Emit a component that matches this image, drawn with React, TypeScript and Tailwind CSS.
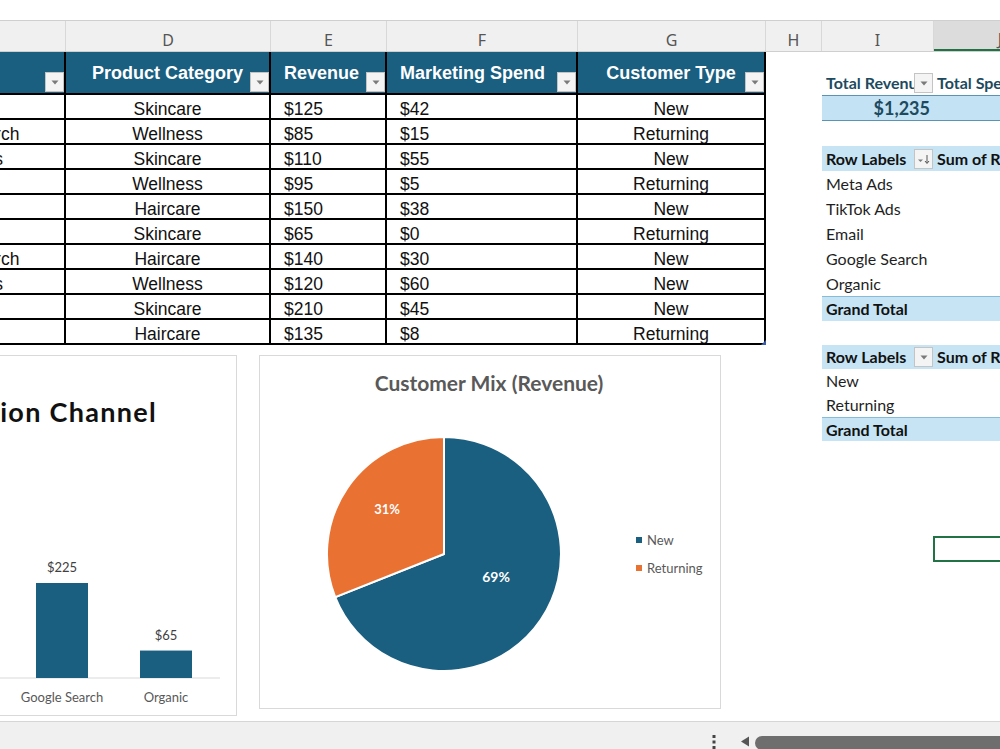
import clsx from "clsx";

const TEAL = "#1a5e80";
const ORANGE = "#e97132";

const COLS = [
  { w: "w-[208px]", align: "justify-center" },
  { w: "w-[205px]", align: "justify-center" },
  { w: "w-[116px]", align: "justify-start pl-[13px]" },
  { w: "w-[191px]", align: "justify-start pl-[13px]" },
  { w: "w-[188px]", align: "justify-center" },
];

const HEAD = ["Channel", "Product Category", "Revenue", "Marketing Spend", "Customer Type"];

const ROWS = [
  ["Meta Ads", "Skincare", "$125", "$42", "New"],
  ["Google Search", "Wellness", "$85", "$15", "Returning"],
  ["TikTok Ads", "Skincare", "$110", "$55", "New"],
  ["Email", "Wellness", "$95", "$5", "Returning"],
  ["Meta Ads", "Haircare", "$150", "$38", "New"],
  ["Organic", "Skincare", "$65", "$0", "Returning"],
  ["Google Search", "Haircare", "$140", "$30", "New"],
  ["TikTok Ads", "Wellness", "$120", "$60", "New"],
  ["Meta Ads", "Skincare", "$210", "$45", "New"],
  ["Email", "Haircare", "$135", "$8", "Returning"],
];

const LETTERS = [
  { l: "", w: "w-[208px]" },
  { l: "D", w: "w-[205px]" },
  { l: "E", w: "w-[116px]" },
  { l: "F", w: "w-[191px]" },
  { l: "G", w: "w-[188px]" },
  { l: "H", w: "w-[56px]" },
  { l: "I", w: "w-[112px]" },
];

const BY_CHANNEL = [
  { name: "Meta Ads", value: 485 },
  { name: "TikTok Ads", value: 230 },
  { name: "Email", value: 230 },
  { name: "Google Search", value: 225 },
  { name: "Organic", value: 65 },
];

function FilterButton({ className, sort }: { className?: string; sort?: boolean }) {
  return (
    <span
      className={clsx(
        "flex h-[20px] w-[19px] items-center justify-center border border-[#c4c4c4] bg-[#f4f4f4]",
        className
      )}
    >
      {sort ? (
        <svg width="14" height="12" viewBox="0 0 14 12">
          <path d="M1 6.5h5L3.5 9z" fill="#7a7a7a" />
          <path d="M10 2v8M8 8l2 2.5L12 8" stroke="#555" strokeWidth="1" fill="none" />
        </svg>
      ) : (
        <svg width="8" height="5" viewBox="0 0 8 5">
          <path d="M0.5 0.5h7L4 4.5z" fill="#7a7a7a" />
        </svg>
      )}
    </span>
  );
}

function ColumnLetters() {
  return (
    <div className="flex h-[32px] shrink-0 border-y border-[#cfcfcf] bg-[#f0f0f0] font-['Noto_Sans',sans-serif] text-[16px] text-[#555]">
      <div className="-ml-[142px] flex">
        {LETTERS.map((c, i) => (
          <div
            key={i}
            className={clsx("flex shrink-0 items-end justify-center border-r border-[#d8d8d8] pb-[4px] leading-[14px]", c.w)}
          >
            {c.l}
          </div>
        ))}
        <div className="flex w-[132px] shrink-0 items-end justify-center border-b-2 border-[#217346] bg-[#dcdcdc] pb-[3px] leading-[14px]">
          J
        </div>
      </div>
    </div>
  );
}

function SalesTable() {
  return (
    <div className="font-['Liberation_Sans',Arial,sans-serif]">
      <div className="flex h-[43px] border-b-2 border-black bg-[#1a5e80] text-[18px] font-bold text-white">
        {HEAD.map((h, i) => (
          <div
            key={i}
            className={clsx(
              "relative flex h-full shrink-0 items-center overflow-hidden whitespace-nowrap border-r-2 border-black pt-[1px]",
              COLS[i].w,
              COLS[i].align
            )}
          >
            {h}
            <FilterButton className="absolute bottom-[1px] right-0" />
          </div>
        ))}
      </div>
      {ROWS.map((r, ri) => (
        <div key={ri} className="relative flex h-[25px] border-b-2 border-black text-[17.5px] text-[#111]">
          {r.map((v, i) => (
            <div
              key={i}
              className={clsx(
                "flex h-full shrink-0 items-center overflow-hidden whitespace-nowrap border-r-2 border-black pt-[4px] leading-[20px]",
                COLS[i].w,
                COLS[i].align
              )}
            >
              {v}
            </div>
          ))}
          {ri === ROWS.length - 1 && (
            <svg className="absolute -bottom-[2px] right-0" width="5" height="5" viewBox="0 0 5 5">
              <path d="M5 0v5H0z" fill="#3b5ba8" />
            </svg>
          )}
        </div>
      ))}
    </div>
  );
}

function ChannelChart() {
  const base = 322;
  const k = 0.4222;
  return (
    <div className="-ml-[250px] h-[361px] w-[629px] shrink-0 border border-[#d9d9d9] bg-white">
      <svg width="627" height="359" className="font-['Lato',sans-serif]">
        <text x="548" y="66" textAnchor="end" fontSize="27" fontWeight="700" letterSpacing="1.3" fill="#111">
          Revenue by Acquisition Channel
        </text>
        <line x1="90" x2="611" y1={base} y2={base} stroke="#d9d9d9" strokeWidth="1" />
        {BY_CHANNEL.map((d, i) => {
          const cx = 141 + i * 104;
          const h = d.value * k;
          return (
            <g key={d.name}>
              <rect x={cx - 26} y={base - h} width="52" height={h} fill={TEAL} />
              <text x={cx} y={base - h - 11} textAnchor="middle" fontSize="13" fill="#404040">
                ${d.value}
              </text>
              <text x={cx} y="346" textAnchor="middle" fontSize="13" fill="#595959">
                {d.name}
              </text>
            </g>
          );
        })}
      </svg>
    </div>
  );
}

function CustomerMixChart() {
  return (
    <div className="ml-[22px] h-[354px] w-[462px] shrink-0 border border-[#d9d9d9] bg-white">
      <svg width="460" height="352" className="font-['Lato',sans-serif]">
        <text x="229" y="35" textAnchor="middle" fontSize="21" fontWeight="700" fill="#595959">
          Customer Mix (Revenue)
        </text>
        <path d="M184 198 L184 81 A117 117 0 1 1 75.2 241.1 Z" fill={TEAL} stroke="#fff" strokeWidth="2" />
        <path d="M184 198 L75.2 241.1 A117 117 0 0 1 184 81 Z" fill={ORANGE} stroke="#fff" strokeWidth="2" />
        <text x="127" y="158" textAnchor="middle" fontSize="13" fontWeight="700" fill="#fff">
          31%
        </text>
        <text x="236" y="226" textAnchor="middle" fontSize="14" fontWeight="700" fill="#fff">
          69%
        </text>
        <rect x="376" y="181" width="6" height="6" fill={TEAL} />
        <text x="387" y="189" fontSize="13" fill="#595959">
          New
        </text>
        <rect x="376" y="209" width="6" height="6" fill={ORANGE} />
        <text x="387" y="217" fontSize="13" fill="#595959">
          Returning
        </text>
      </svg>
    </div>
  );
}

function PivotHeader({ left, right, sort, blue }: { left: string; right: string; sort?: boolean; blue?: boolean }) {
  return (
    <div className={clsx("flex h-full items-center font-bold", blue ? "bg-[#c6e4f4] text-[#111]" : "text-[#1d4a5e]")}>
      <div className="flex w-[112px] shrink-0 items-center">
        <span className="w-[92px] overflow-hidden whitespace-nowrap pl-[4px]">{left}</span>
        <FilterButton sort={sort} />
      </div>
      <span className="whitespace-nowrap pl-[3px]">{right}</span>
    </div>
  );
}

function Pivots() {
  const channels = ["Meta Ads", "TikTok Ads", "Email", "Google Search", "Organic"];
  return (
    <div className="min-w-0 flex-1 overflow-hidden pl-[56px] font-['Lato',sans-serif] text-[16px]">
      <div className="flex h-[43px] items-end">
        <div className="h-[24px] w-full">
          <PivotHeader left="Total Revenue" right="Total Spend" />
        </div>
      </div>
      <div className="flex h-[26px] items-center border-y border-[#5b93b3] bg-[#c3e2f3] text-[18px] font-bold text-[#1d4a5e]">
        <span className="w-[112px] pr-[4px] text-right">$1,235</span>
      </div>
      <div className="h-[25px]" />
      <div className="h-[25px]">
        <PivotHeader left="Row Labels" right="Sum of Revenue" sort blue />
      </div>
      {channels.map((c) => (
        <div key={c} className="flex h-[25px] items-center pl-[4px] text-[#1f1f1f]">
          {c}
        </div>
      ))}
      <div className="flex h-[25px] items-center border-t border-[#86bcd8] bg-[#c6e4f4] pl-[4px] font-bold text-[#111]">
        Grand Total
      </div>
      <div className="h-[24px]" />
      <div className="h-[24px]">
        <PivotHeader left="Row Labels" right="Sum of Revenue" blue />
      </div>
      <div className="flex h-[24px] items-center pl-[4px] text-[#1f1f1f]">New</div>
      <div className="flex h-[24px] items-center pl-[4px] text-[#1f1f1f]">Returning</div>
      <div className="flex h-[24px] items-center border-t border-[#86bcd8] bg-[#c6e4f4] pl-[4px] font-bold text-[#111]">
        Grand Total
      </div>
      <div className="h-[95px]" />
      <div className="flex h-[26px] pl-[111px]">
        <div className="h-full w-[90px] shrink-0 border-2 border-[#217346]" />
      </div>
    </div>
  );
}

function StatusBar() {
  return (
    <div className="flex h-[28px] shrink-0 items-start justify-end border-t border-[#d6d6d6] bg-[#f0f0f0] pt-[13px]">
      <svg width="4" height="14" viewBox="0 0 4 14" className="mr-[24px]">
        <rect x="0.5" y="0" width="3" height="3" fill="#444" />
        <rect x="0.5" y="5.5" width="3" height="3" fill="#444" />
        <rect x="0.5" y="11" width="3" height="3" fill="#444" />
      </svg>
      <svg width="10" height="11" viewBox="0 0 10 11" className="mr-[5px] mt-[1px]">
        <path d="M9 0.5v10L1 5.5z" fill="#555" />
      </svg>
      <div className="mt-[1px] h-[14px] w-[245px] rounded-l-full bg-[#6e6e6e]" />
    </div>
  );
}

export default function App() {
  return (
    <div className="flex h-[749px] w-[1000px] flex-col overflow-hidden bg-white">
      <div className="h-[20px] shrink-0" />
      <ColumnLetters />
      <div className="flex min-h-0 flex-1">
        <div className="w-[766px] shrink-0">
          <div className="-ml-[142px]">
            <SalesTable />
            <div className="mt-[10px] flex items-start">
              <ChannelChart />
              <CustomerMixChart />
            </div>
          </div>
        </div>
        <Pivots />
      </div>
      <StatusBar />
    </div>
  );
}
